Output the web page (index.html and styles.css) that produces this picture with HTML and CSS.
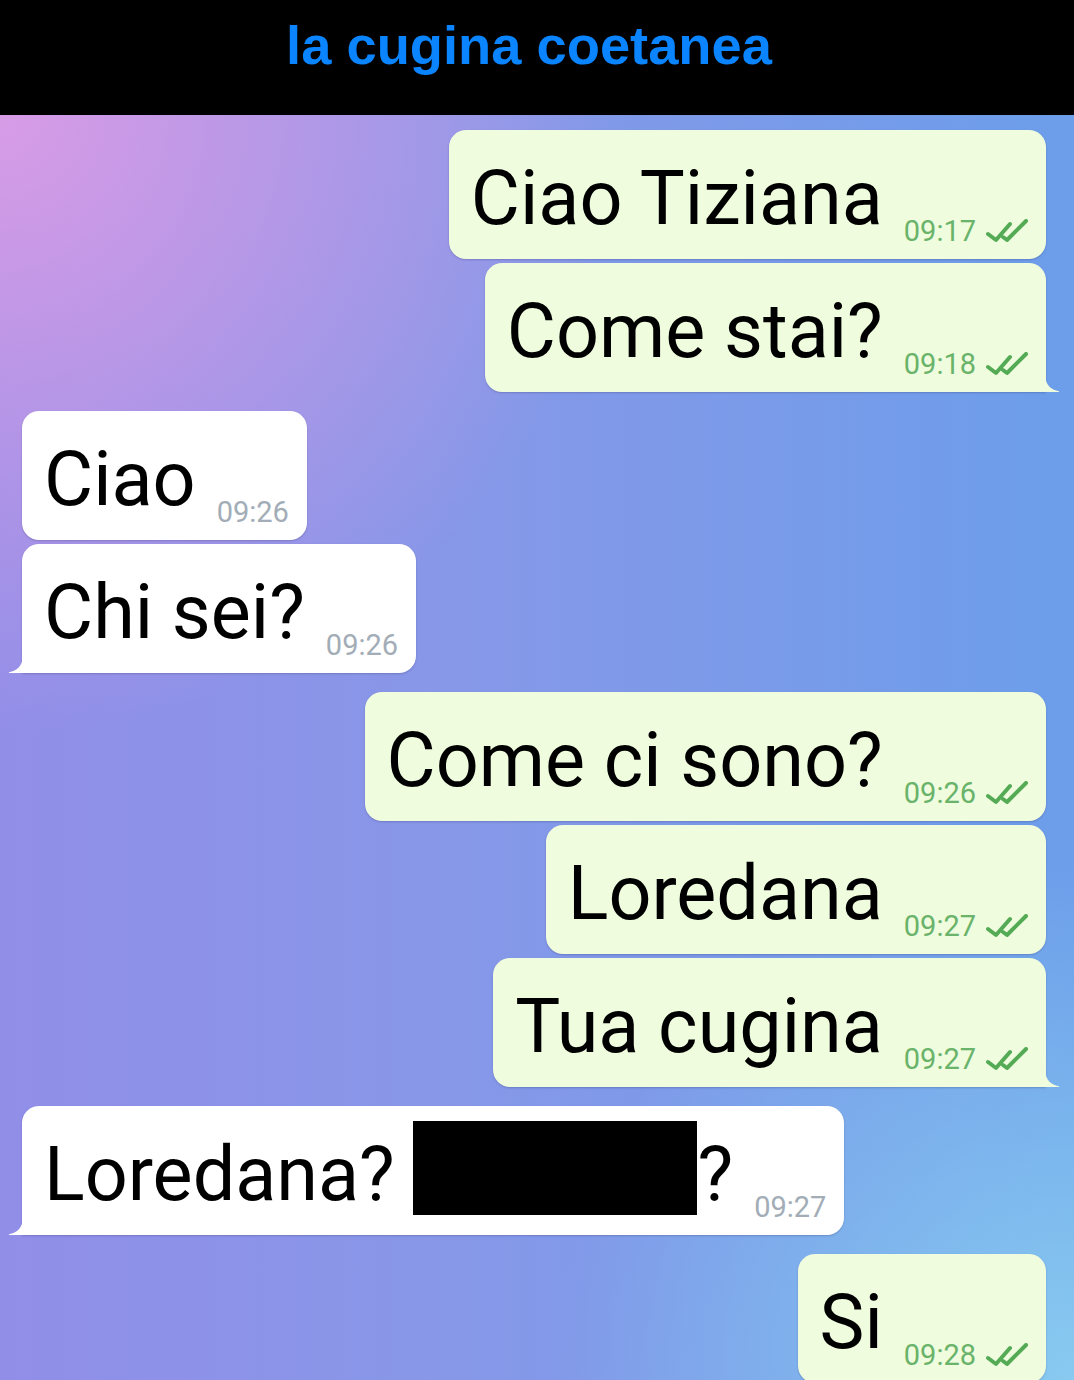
FILE: index.html
```html
<!DOCTYPE html>
<html lang="it">
<head>
    <meta charset="UTF-8">
    <meta name="viewport" content="width=device-width, initial-scale=1.0">
    <title>la cugina coetanea</title>
    <link rel="stylesheet" href="styles.css">
</head>
<body>
    <div class="header">
        <h1>la cugina coetanea</h1>
    </div>

    <div class="chat">
        <div class="group out">
            <div class="bubble">
                <span class="text">Ciao Tiziana</span>
                <span class="meta">09:17 <svg class="checks" viewBox="0 0 44 24"><path d="M3 15 L11 21 L25 5 M18 18 L22 21 L41 2"/></svg></span>
            </div>
            <div class="bubble tail">
                <span class="text">Come stai?</span>
                <span class="meta">09:18 <svg class="checks" viewBox="0 0 44 24"><path d="M3 15 L11 21 L25 5 M18 18 L22 21 L41 2"/></svg></span>
                <svg class="tail-shape" viewBox="0 0 15 20"><path d="M0 0 C0 10 3 17 13 19 C15 19.5 14.5 20 12 20 L0 20 Z"/></svg>
            </div>
        </div>

        <div class="group in">
            <div class="bubble">
                <span class="text">Ciao</span>
                <span class="meta">09:26</span>
            </div>
            <div class="bubble tail">
                <span class="text">Chi sei?</span>
                <span class="meta">09:26</span>
                <svg class="tail-shape" viewBox="0 0 15 20"><path d="M15 0 C15 10 12 17 2 19 C0 19.5 0.5 20 3 20 L15 20 Z"/></svg>
            </div>
        </div>

        <div class="group out">
            <div class="bubble">
                <span class="text">Come ci sono?</span>
                <span class="meta">09:26 <svg class="checks" viewBox="0 0 44 24"><path d="M3 15 L11 21 L25 5 M18 18 L22 21 L41 2"/></svg></span>
            </div>
            <div class="bubble">
                <span class="text">Loredana</span>
                <span class="meta">09:27 <svg class="checks" viewBox="0 0 44 24"><path d="M3 15 L11 21 L25 5 M18 18 L22 21 L41 2"/></svg></span>
            </div>
            <div class="bubble tail">
                <span class="text">Tua cugina</span>
                <span class="meta">09:27 <svg class="checks" viewBox="0 0 44 24"><path d="M3 15 L11 21 L25 5 M18 18 L22 21 L41 2"/></svg></span>
                <svg class="tail-shape" viewBox="0 0 15 20"><path d="M0 0 C0 10 3 17 13 19 C15 19.5 14.5 20 12 20 L0 20 Z"/></svg>
            </div>
        </div>

        <div class="group in">
            <div class="bubble tail">
                <span class="text">Loredana? <span class="redacted"></span>?</span>
                <span class="meta">09:27</span>
                <svg class="tail-shape" viewBox="0 0 15 20"><path d="M15 0 C15 10 12 17 2 19 C0 19.5 0.5 20 3 20 L15 20 Z"/></svg>
            </div>
        </div>

        <div class="group out last">
            <div class="bubble">
                <span class="text">Si</span>
                <span class="meta">09:28 <svg class="checks" viewBox="0 0 44 24"><path d="M3 15 L11 21 L25 5 M18 18 L22 21 L41 2"/></svg></span>
            </div>
        </div>
    </div>
</body>
</html>
```

FILE: styles.css
```css
* {
    margin: 0;
    padding: 0;
    box-sizing: border-box;
}

body {
    font-family: Roboto, 'Noto Sans', sans-serif;
    background: #000;
    overflow: hidden;
}

.header {
    height: 115px;
    padding: 14px 16px 0 0;
    background: #000;
    text-align: center;
}

.header h1 {
    font-family: 'Liberation Sans', Arial, sans-serif;
    font-size: 54.3px;
    font-weight: 700;
    color: #0a84ff;
}

.chat {
    height: calc(100vh - 115px);
    overflow: hidden;
    padding: 15px 28px 0 22px;
    display: flex;
    flex-direction: column;
    background:
        radial-gradient(circle at 0 0, rgba(216, 156, 230, 1) 0, rgba(216, 156, 230, 0) 620px),
        radial-gradient(circle at 100% 100%, rgba(136, 202, 240, 1) 0, rgba(136, 202, 240, 0) 520px),
        linear-gradient(90deg, #918ee8 0%, #8897e8 40%, #6c9eea 100%);
}

.group {
    display: flex;
    flex-direction: column;
    gap: 4px;
    margin-bottom: 19px;
}

.group.out {
    align-items: flex-end;
}

.group.in {
    align-items: flex-start;
}

.bubble {
    position: relative;
    display: flex;
    align-items: flex-end;
    height: 129px;
    padding: 24px 18px 11px 22px;
    border-radius: 17px;
    box-shadow: 0 1px 2px rgba(40, 40, 90, 0.25);
}

.out .bubble {
    background: #effcde;
    padding-right: 17px;
}

.in .bubble {
    background: #fff;
}

.out .bubble.tail {
    border-bottom-right-radius: 0;
}

.in .bubble.tail {
    border-bottom-left-radius: 0;
}

.text {
    font-size: 75.5px;
    line-height: 89px;
    color: #000;
    white-space: nowrap;
    margin-bottom: 5px;
    align-self: flex-start;
}

.meta {
    display: flex;
    align-items: center;
    gap: 9px;
    margin-left: 21px;
    font-size: 29px;
    line-height: 34px;
    white-space: nowrap;
}

.out .meta {
    color: #6ab36a;
}

.in .meta {
    color: #a2adb7;
}

.checks {
    width: 44px;
    height: 24px;
    fill: none;
    stroke: #55ab55;
    stroke-width: 4;
    stroke-linecap: round;
    stroke-linejoin: round;
}

.tail-shape {
    position: absolute;
    bottom: 0;
    width: 15px;
    height: 20px;
}

.out .tail-shape {
    right: -14px;
    fill: #effcde;
}

.in .tail-shape {
    left: -14px;
    fill: #fff;
}

.redacted {
    display: inline-block;
    width: 284px;
    height: 94px;
    background: #000;
    vertical-align: -15px;
    margin-top: -14px;
}
```
